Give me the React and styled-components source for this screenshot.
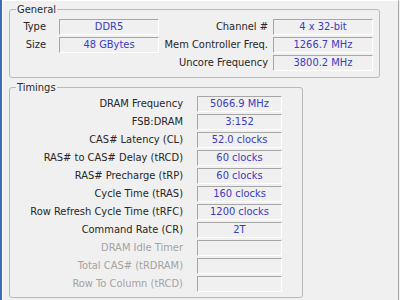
import React from 'react';
import styled, { createGlobalStyle } from 'styled-components';

const Global = createGlobalStyle`
  html, body { margin: 0; padding: 0; background: #f0f0f0; }
  body { width: 400px; height: 300px; overflow: hidden; }
`;

const Window = styled.div`
  width: 400px;
  height: 300px;
  display: flex;
  background: #f0f0f0;
  font-family: "DejaVu Sans Condensed", "DejaVu Sans", sans-serif;
  font-stretch: condensed;
  font-size: 11px;
`;

const Frame = styled.div`
  width: 2px;
  background: #3e6db6;
  border-right: 1px solid #ffffff;
`;

const Page = styled.div`
  flex: 1;
  display: flex;
  flex-direction: column;
  align-items: flex-start;
  padding-left: 6px;
  margin-right: 1px;
  border-right: 1px solid #a8a8a8;
  border-top: 1px solid #ffffff;
`;

const Group = styled.fieldset`
  box-sizing: border-box;
  width: ${(p) => p.$width}px;
  margin: ${(p) => p.$mt}px 0 0;
  padding: ${(p) => p.$pt}px 0 ${(p) => p.$pb}px;
  border: 1px solid #b9b9b9;
  border-radius: 3px;
  min-width: 0;
`;

const Legend = styled.legend`
  margin-left: 6px;
  padding: 0 1px;
  line-height: 13px;
  color: #2a2a2a;
`;

const Grid = styled.div`
  display: grid;
  grid-template-columns: ${(p) => p.$cols};
  grid-auto-rows: 16px;
  row-gap: 2px;
`;

const Label = styled.div`
  grid-column: ${(p) => p.$col || 'auto'};
  text-align: right;
  padding-right: ${(p) => p.$gap}px;
  line-height: 16px;
  white-space: nowrap;
  color: ${(p) => (p.$disabled ? '#a3a3a3' : '#262626')};
`;

const Field = styled.div`
  box-sizing: border-box;
  height: 16px;
  border-style: solid;
  border-width: 1px;
  border-color: #a6a6a6 #ffffff #ffffff #a6a6a6;
  text-align: center;
  line-height: 14px;
  color: #3a3abf;
  white-space: nowrap;
`;

const general = [
  { left: ['Type', 'DDR5'], right: ['Channel #', '4 x 32-bit'] },
  { left: ['Size', '48 GBytes'], right: ['Mem Controller Freq.', '1266.7 MHz'] },
  { left: null, right: ['Uncore Frequency', '3800.2 MHz'] },
];

const timings = [
  ['DRAM Frequency', '5066.9 MHz'],
  ['FSB:DRAM', '3:152'],
  ['CAS# Latency (CL)', '52.0 clocks'],
  ['RAS# to CAS# Delay (tRCD)', '60 clocks'],
  ['RAS# Precharge (tRP)', '60 clocks'],
  ['Cycle Time (tRAS)', '160 clocks'],
  ['Row Refresh Cycle Time (tRFC)', '1200 clocks'],
  ['Command Rate (CR)', '2T'],
  ['DRAM Idle Timer', '', true],
  ['Total CAS# (tRDRAM)', '', true],
  ['Row To Column (tRCD)', '', true],
];

export default function App() {
  return (
    <>
      <Global />
      <Window>
        <Frame />
        <Page>
          <Group $width={371} $mt={2} $pt={3} $pb={6}>
            <Legend>General</Legend>
            <Grid $cols="49px 100px 114px 100px">
              {general.map((row, i) => (
                <React.Fragment key={i}>
                  {row.left ? (
                    <>
                      <Label $gap={13}>{row.left[0]}</Label>
                      <Field>{row.left[1]}</Field>
                    </>
                  ) : null}
                  <Label $gap={5} $col={row.left ? 'auto' : '3'}>{row.right[0]}</Label>
                  <Field>{row.right[1]}</Field>
                </React.Fragment>
              ))}
            </Grid>
          </Group>
          <Group $width={294} $mt={3} $pt={2} $pb={5}>
            <Legend>Timings</Legend>
            <Grid $cols="187px 85px">
              {timings.map(([label, value, disabled]) => (
                <React.Fragment key={label}>
                  <Label $gap={14} $disabled={disabled}>{label}</Label>
                  <Field>{value}</Field>
                </React.Fragment>
              ))}
            </Grid>
          </Group>
        </Page>
      </Window>
    </>
  );
}
